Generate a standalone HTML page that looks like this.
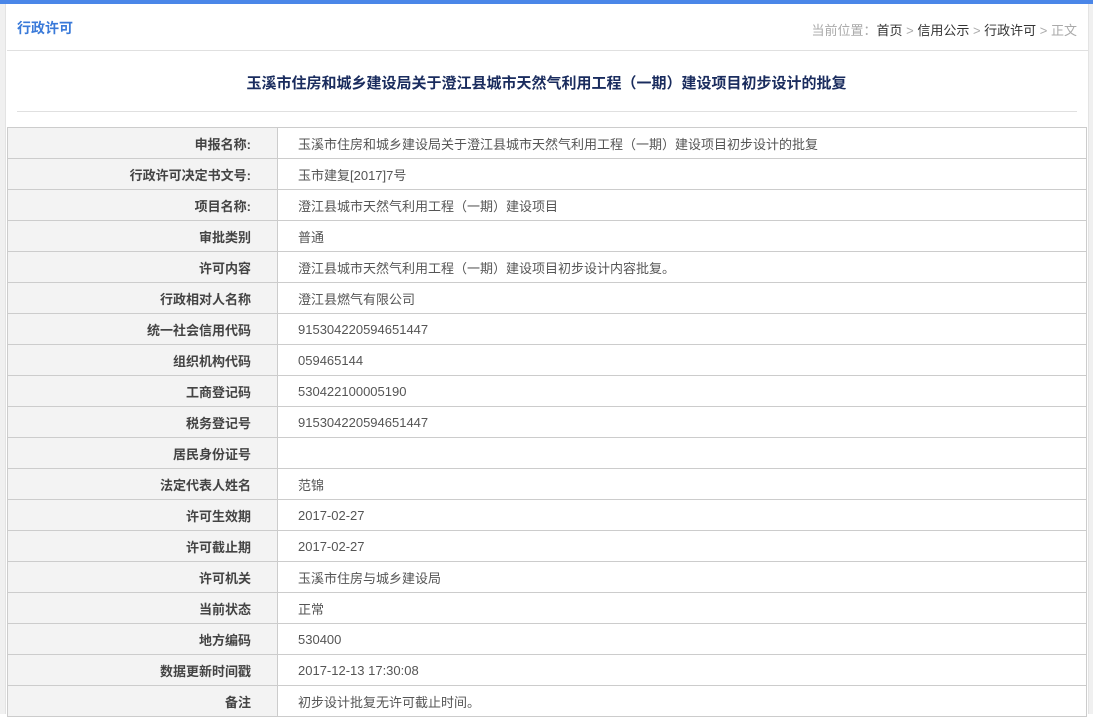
<!DOCTYPE html>
<html><head><meta charset="utf-8"><style>
*{margin:0;padding:0;box-sizing:border-box}
body{width:1093px;height:714px;overflow:hidden;background:#fff;font-family:"Liberation Sans","Noto Sans CJK SC",sans-serif;position:relative}
.top{position:absolute;left:0;top:0;width:1093px;height:4px;background:#4a86e8}
.lb{position:absolute;left:0;top:4px;width:6px;height:710px;background:#f0f0f0;border-right:1px solid #e3e3e3}
.rb{position:absolute;left:1088px;top:4px;width:5px;height:710px;background:#f0f0f0;border-left:1px solid #e3e3e3}
.h{position:absolute;left:17px;top:18px;font-size:14px;color:#3a7ad9;font-weight:bold}
.bc{position:absolute;right:16px;top:20px;font-size:13px;color:#aaa}
.bc b{font-weight:normal;color:#333}
.l1{position:absolute;left:7px;top:50px;width:1081px;height:1px;background:#e0e0e0}
.t{position:absolute;left:0;width:1093px;top:72px;text-align:center;font-size:15px;font-weight:bold;color:#1a2c5e}
.l2{position:absolute;left:17px;top:111px;width:1060px;height:1px;background:#e0e0e0}
table{position:absolute;left:7px;top:127px;width:1080px;border-collapse:collapse;font-size:13px}
td{height:31px;border:1px solid #ccc;padding:0}
td.k{width:270px;background:#f3f3f3;text-align:right;padding-right:26px;font-weight:bold;color:#444}
td.v{padding-left:20px;color:#555}
</style></head><body>
<div class="top"></div><div class="lb"></div><div class="rb"></div>
<div class="h">行政许可</div>
<div class="bc">当前位置：<b>首页</b> &gt; <b>信用公示</b> &gt; <b>行政许可</b> &gt; 正文</div>
<div class="l1"></div>
<div class="t">玉溪市住房和城乡建设局关于澄江县城市天然气利用工程（一期）建设项目初步设计的批复</div>
<div class="l2"></div>
<table>
<tr><td class="k">申报名称:</td><td class="v">玉溪市住房和城乡建设局关于澄江县城市天然气利用工程（一期）建设项目初步设计的批复</td></tr>
<tr><td class="k">行政许可决定书文号:</td><td class="v">玉市建复[2017]7号</td></tr>
<tr><td class="k">项目名称:</td><td class="v">澄江县城市天然气利用工程（一期）建设项目</td></tr>
<tr><td class="k">审批类别</td><td class="v">普通</td></tr>
<tr><td class="k">许可内容</td><td class="v">澄江县城市天然气利用工程（一期）建设项目初步设计内容批复。</td></tr>
<tr><td class="k">行政相对人名称</td><td class="v">澄江县燃气有限公司</td></tr>
<tr><td class="k">统一社会信用代码</td><td class="v">915304220594651447</td></tr>
<tr><td class="k">组织机构代码</td><td class="v">059465144</td></tr>
<tr><td class="k">工商登记码</td><td class="v">530422100005190</td></tr>
<tr><td class="k">税务登记号</td><td class="v">915304220594651447</td></tr>
<tr><td class="k">居民身份证号</td><td class="v"></td></tr>
<tr><td class="k">法定代表人姓名</td><td class="v">范锦</td></tr>
<tr><td class="k">许可生效期</td><td class="v">2017-02-27</td></tr>
<tr><td class="k">许可截止期</td><td class="v">2017-02-27</td></tr>
<tr><td class="k">许可机关</td><td class="v">玉溪市住房与城乡建设局</td></tr>
<tr><td class="k">当前状态</td><td class="v">正常</td></tr>
<tr><td class="k">地方编码</td><td class="v">530400</td></tr>
<tr><td class="k">数据更新时间戳</td><td class="v">2017-12-13 17:30:08</td></tr>
<tr><td class="k">备注</td><td class="v">初步设计批复无许可截止时间。</td></tr>
</table>
</body></html>
